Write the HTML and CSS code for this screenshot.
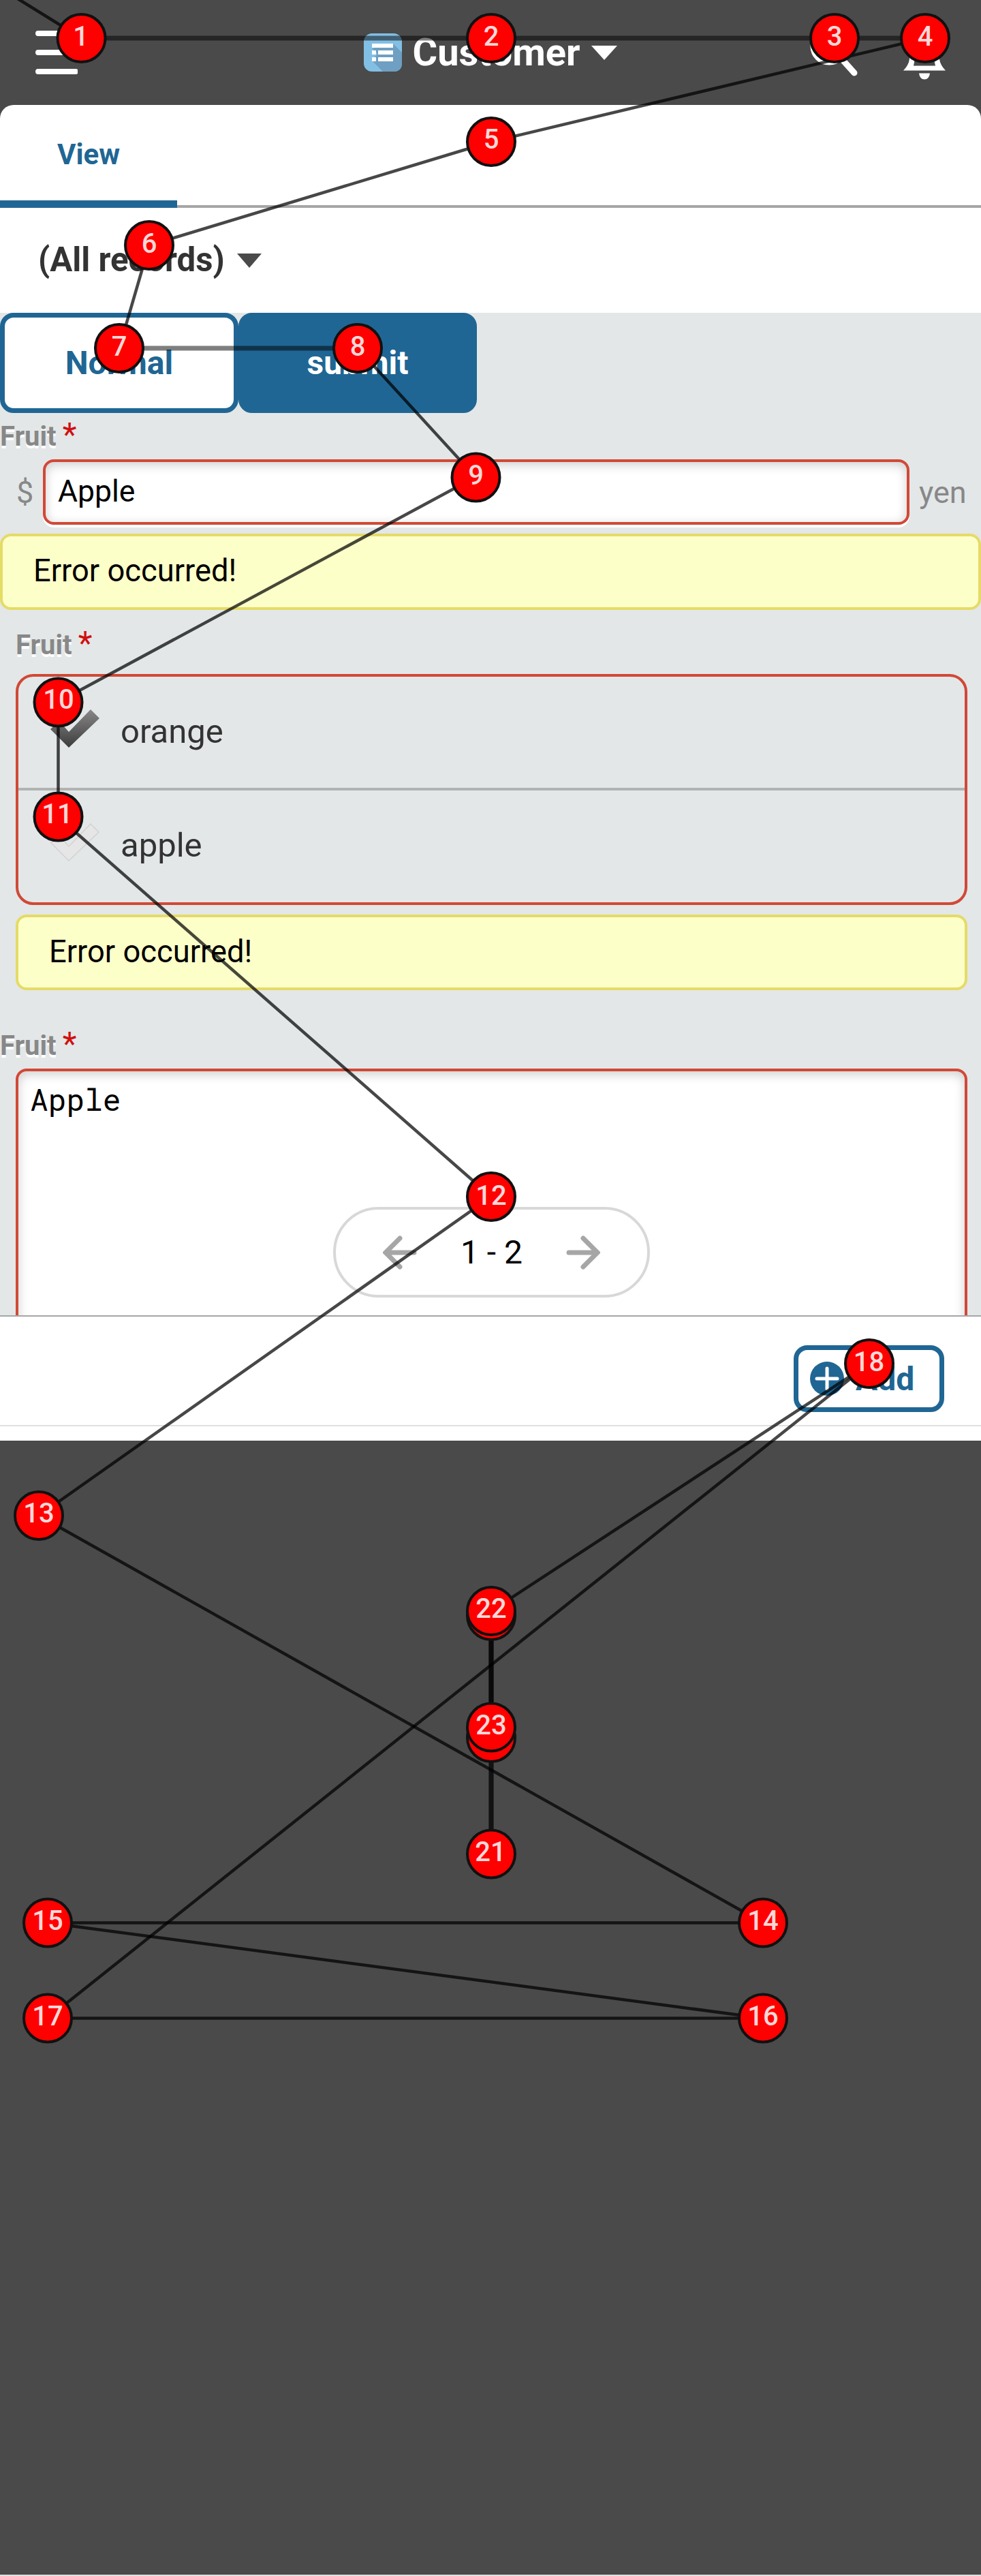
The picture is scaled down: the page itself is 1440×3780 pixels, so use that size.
FILE: index.html
```html
<!DOCTYPE html>
<html lang="en">
<head>
<meta charset="utf-8">
<title>Customer</title>
<link rel="stylesheet" href="styles.css">
</head>
<body>
<div class="screen">
  <header class="topbar">
    <svg class="menu-icon" viewBox="0 0 66 66"><path d="M8 5H63M8 33H63M8 61H63"/></svg>
    <div class="app">
      <svg class="app-icon" viewBox="0 0 56 56"><rect width="56" height="56" rx="12" fill="#82bfe5"/><path d="M43 15L56 28V44Q56 56 44 56H28L12 40L20 30L12 22Z" fill="#6f9fc2"/><path d="M12 15H43V21H12ZM12 25H18V31H12ZM21 25H43V31H21ZM12 35H18V41H12ZM21 35H43V41H21Z" fill="#fff"/></svg>
      <span class="app-name">Customer</span>
      <svg class="caret" viewBox="0 0 38 21"><path d="M0 0H38L19 21Z" fill="#fff"/></svg>
    </div>
    <div class="tools">
      <svg class="search-icon" viewBox="0 0 72 72"><circle cx="27" cy="27" r="23"/><path d="M46 46L64 66"/></svg>
      <svg class="bell-icon" viewBox="0 -1.5 64 80"><path d="M32 10Q54 12 54 48Q55 57 63 65H1Q9 57 10 48Q10 12 32 10ZM16 58H48Q46 50 46 38Q46 20 32 20Q18 20 18 38Q18 50 16 58Z"/><path d="M24 69H40Q39 78 32 78Q25 78 24 69Z"/></svg>
    </div>
  </header>
  <main class="sheet">
    <nav class="tabs"><span class="tab">View</span></nav>
    <div class="view-select"><span>(All records)</span><svg class="view-caret" viewBox="0 0 36 21"><path d="M0 0H36L18 21Z"/></svg></div>
    <section class="form">
      <div class="buttons"><button class="btn">Normal</button><button class="btn primary">submit</button></div>
      <div class="label">Fruit<b>*</b></div>
      <div class="input-row"><span>$</span><div class="text-input">Apple</div><span>yen</span></div>
      <div class="error">Error occurred!</div>
      <div class="group">
        <div class="label group-label">Fruit<b>*</b></div>
        <div class="choices">
          <div class="choice"><svg class="check" viewBox="0 0 72 78"><defs><linearGradient id="ink" x2="0" y2="1"><stop stop-color="#888"/><stop offset="1" stop-color="#3c3c3c"/></linearGradient></defs><path d="M0 29L13 17L27 33L59 0L72 13L27 56Z" fill="url(#ink)"/></svg>orange</div>
          <div class="choice"><svg class="check" viewBox="0 0 72 78"><path d="M1 29L13 18L27 34L59 1L71 13L27 55Z" fill="#e6e6e6" stroke="#d2d2d2" stroke-width="1.5"/></svg>apple</div>
        </div>
        <div class="error group-error">Error occurred!</div>
      </div>
      <div class="label area-label">Fruit<b>*</b></div>
      <div class="textarea">Apple</div>
      <div class="pager">
        <svg class="arrow" viewBox="0 0 50 50"><path d="M46 25H5M25 4L4 25L25 46"/></svg>
        <span>1 - 2</span>
        <svg class="arrow" viewBox="0 0 50 50"><path d="M4 25H45M25 4L46 25L25 46"/></svg>
      </div>
    </section>
    <footer class="actions">
      <button class="add"><svg class="plus" viewBox="0 0 50 50"><circle cx="25" cy="25" r="25"/><path d="M10 25H40M25 10V40"/></svg>Add</button>
    </footer>
  </main>
  <svg class="overlay" viewBox="0 0 1440 3780">
    <g class="paths">
      <path d="M0 -18L119.5 56"/><path class="wide" d="M119.5 56H721"/><path class="wide" d="M721 56H1225"/><path class="wide" d="M1225 56H1358"/><path d="M1358 56L721 208"/><path d="M721 208L219 360"/><path d="M219 360L175 511"/><path class="wide" d="M175 511H525"/><path d="M525 511L698 700"/><path d="M698 700L85.5 1030"/><path d="M85.5 1030V1199"/><path d="M85.5 1199L721 1756"/><path d="M721 1756L57 2224"/><path d="M57 2224L1120 2821.5"/><path d="M1120 2821.5H70"/><path d="M70 2821.5L1120 2961.5"/><path d="M1120 2961.5H70"/><path d="M70 2961.5L1276 2001"/><path d="M1276 2001L721 2364"/><path class="wide" d="M721 2372V2550"/><path class="wide" d="M721 2550V2720"/><path class="wide" d="M721 2720V2364"/><path class="wide" d="M721 2364V2534"/>
    </g>
    <g class="dots">
      <circle cx="119.5" cy="56" r="35"/><circle cx="721" cy="56" r="35"/><circle cx="1225" cy="56" r="35"/><circle cx="1358" cy="56" r="35"/><circle cx="721" cy="208" r="35"/><circle cx="219" cy="360" r="35"/><circle cx="175" cy="511" r="35"/><circle cx="525" cy="511" r="35"/><circle cx="698.5" cy="700.5" r="35"/><circle cx="85.5" cy="1030.5" r="35"/><circle cx="85.5" cy="1198.5" r="35"/><circle cx="721" cy="1756" r="35"/><circle cx="57" cy="2224" r="35"/><circle cx="1120" cy="2821.5" r="35"/><circle cx="70" cy="2821.5" r="35"/><circle cx="1120" cy="2961.5" r="35"/><circle cx="70" cy="2961.5" r="35"/><circle cx="1276" cy="2001" r="35"/><circle cx="721" cy="2371" r="35"/><circle cx="721" cy="2550" r="35"/><circle cx="721" cy="2720.5" r="35"/><circle cx="721" cy="2364" r="35"/><circle cx="721" cy="2534.5" r="35"/>
    </g>
    <g class="nums">
      <text x="118.5" y="67">1</text><text x="721" y="67">2</text><text x="1225" y="67">3</text><text x="1358" y="67">4</text><text x="721" y="218">5</text><text x="219" y="371">6</text><text x="175" y="522">7</text><text x="525" y="522">8</text><text x="698.5" y="711">9</text><text x="86" y="1040">10</text><text x="84" y="1208">11</text><text x="721" y="1768">12</text><text x="57" y="2234">13</text><text x="1120" y="2832">14</text><text x="70" y="2832">15</text><text x="1120" y="2972">16</text><text x="70" y="2972">17</text><text x="1275.5" y="2012">18</text><text x="720" y="2731">21</text><text x="721" y="2374">22</text><text x="721" y="2545">23</text>
    </g>
  </svg>
</div>
</body>
</html>
```

FILE: styles.css
```css
* { box-sizing: border-box; }
body { margin: 0; background: #4a4a4a; font-family: Roboto, "Liberation Sans", sans-serif; color: #333; }
button { font-family: inherit; margin: 0; padding: 0; }
svg { display: block; flex: none; }
.screen { position: relative; height: 3780px; overflow: hidden; border-bottom: 2px solid #e0e0e0; }
.topbar { height: 154px; display: grid; grid-template-columns: 1fr auto 1fr; align-items: center; padding: 0 51px 0 48px; }
.menu-icon { width: 66px; height: 66px; fill: none; stroke: #fff; stroke-width: 8; stroke-linecap: round; }
.app { display: flex; align-items: center; margin-left: 3px; }
.app-icon { width: 56px; height: 56px; }
.app-name { margin-left: 16px; font-size: 56px; font-weight: 700; color: #fff; line-height: 66px; }
.caret { width: 38px; height: 21px; margin-left: 17px; }
.tools { display: flex; align-items: center; justify-content: flex-end; gap: 63px; }
.search-icon { width: 72px; height: 72px; fill: none; stroke: #fff; stroke-width: 9; stroke-linecap: round; overflow: visible; }
.bell-icon { width: 64px; height: 80px; fill: #fff; overflow: visible; }
.sheet { background: #fff; border-radius: 20px 20px 0 0; height: 1960px; overflow: hidden; }
.tabs { height: 151px; box-shadow: inset 0 -4px #a6a6a6; }
.tab { display: block; width: 260px; height: 151px; border-bottom: 11px solid #206694; color: #206694; font-size: 42px; font-weight: 700; line-height: 145px; text-align: center; }
.view-select { height: 154px; padding-left: 56px; display: flex; align-items: center; font-size: 49.2px; font-weight: 700; }
.view-select span { margin-top: -2px; }
.view-caret { width: 36px; height: 21px; margin-left: 18px; fill: #4a4a4a; }
.form { position: relative; height: 1471px; overflow: hidden; background: #e3e7e8; }
.buttons { display: flex; }
.btn { width: 350px; height: 147px; border: 7px solid #206694; border-radius: 20px; background: #fff; color: #206694; font-size: 48px; font-weight: 700; }
.primary { background: #206694; color: #fff; }
.label { height: 68px; font-size: 40px; line-height: 48px; padding-top: 8px; font-weight: 700; color: #888; text-shadow: 0 4px #fff; }
.label b { margin-left: 9px; font-size: 48px; font-weight: 400; color: #d01010; text-shadow: none; }
.input-row { display: flex; align-items: center; height: 96px; padding-left: 24px; font-size: 45px; color: #888; }
.text-input { width: 1272px; height: 96px; margin: 0 14px; padding-left: 18px; border: 4px solid #d14836; border-radius: 16px; background: #fff; color: #000; font-size: 44.5px; line-height: 86px; box-shadow: inset 0 4px 16px rgba(0,0,0,.2), 0 4px #fff; }
.input-row span:first-child { width: 25px; }
.error { height: 112px; margin-top: 13px; border: 4px solid #e5db67; border-radius: 16px; background: #fdffc9; color: #000; font-size: 45.3px; line-height: 101px; padding-left: 45px; }
.group { padding: 0 20px 0 23px; }
.group-label { height: 94px; padding-top: 25px; }
.choices { height: 339px; border: 4px solid #d14836; border-radius: 26px; }
.choice { display: flex; align-items: center; height: 163px; font-size: 49px; padding: 0 0 3px 47px; }
.choice + .choice { border-top: 4px solid #b3b3b3; height: 168px; }
.check { width: 72px; height: 78px; margin: 13px 31px 0 0; }
.group-error { margin-top: 14px; height: 111px; }
.area-label { margin-top: 49px; height: 66px; padding-top: 6px; }
.textarea { margin: 0 20px 0 23px; height: 500px; border: 4px solid #d14836; border-radius: 16px; background: #fff; color: #000; padding: 11px 17px; font: 44.5px/60px "Roboto Mono", "Noto Sans Mono", "DejaVu Sans Mono", monospace; box-shadow: inset 0 4px 16px rgba(0,0,0,.2); }
.pager { position: absolute; left: 489px; bottom: 26px; width: 465px; height: 133px; border: 4px solid #d8d8d8; border-radius: 67px; background: #fff; display: flex; align-items: center; justify-content: space-between; padding: 0 69px; font-size: 48px; color: #000; }
.arrow { width: 50px; height: 50px; fill: none; stroke: #a6a6a6; stroke-width: 7; stroke-linecap: round; }
.actions { height: 163px; border-top: 2px solid #a6a6a6; border-bottom: 2px solid #e0e0e0; display: flex; justify-content: flex-end; padding: 42px 54px 0 0; }
.add { width: 221px; height: 98px; border: 7px solid #206694; border-radius: 20px; background: #fff; color: #206694; font-size: 48px; font-weight: 700; display: flex; align-items: center; padding-left: 17px; }
.plus { width: 50px; height: 50px; margin-right: 17px; fill: #206694; }
.plus path { stroke: #fff; stroke-width: 5; stroke-linecap: round; }
.overlay { position: absolute; left: 0; top: 0; width: 1440px; height: 3780px; }
.paths path { fill: none; stroke: #000; stroke-opacity: .72; stroke-width: 4.5; }
.paths .wide { stroke-opacity: .5; stroke-width: 7; }
.dots circle { fill: #f00; stroke: #111; stroke-width: 4; }
.nums { fill: #ffd8d8; font-size: 40px; font-weight: 500; text-anchor: middle; }
```
